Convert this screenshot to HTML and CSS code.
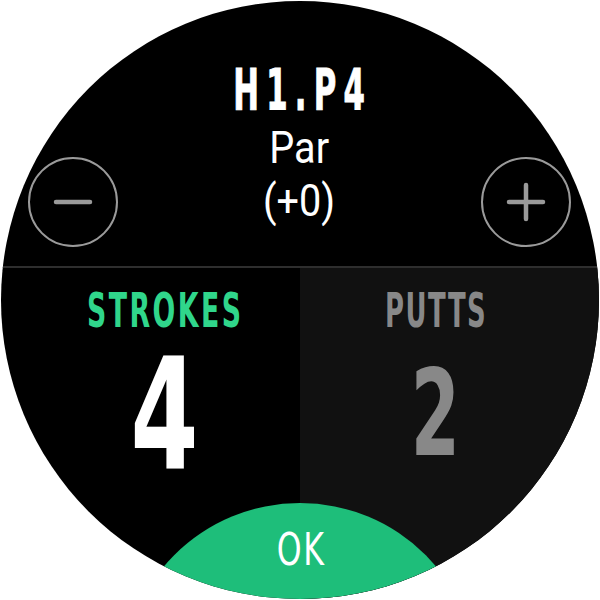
FILE: index.html
```html
<!DOCTYPE html>
<html>
<head>
<meta charset="utf-8">
<link rel="stylesheet" href="styles.css">
</head>
<body>
<div class="watch">
  <div class="top">
    <div class="btn">
      <svg width="40" height="40" viewBox="0 0 40 40"><line x1="3" y1="20" x2="37" y2="20" stroke="#9a9a9a" stroke-width="4.5" stroke-linecap="round"/></svg>
    </div>
    <div class="info">
      <div class="hole"><span class="cond">H1.P4</span></div>
      <div class="par"><span class="narrow">Par</span></div>
      <div class="par"><span class="narrow">(+0)</span></div>
    </div>
    <div class="btn">
      <svg width="40" height="40" viewBox="0 0 40 40"><line x1="3" y1="20" x2="37" y2="20" stroke="#9a9a9a" stroke-width="4.5" stroke-linecap="round"/><line x1="20" y1="3" x2="20" y2="37" stroke="#9a9a9a" stroke-width="4.5" stroke-linecap="round"/></svg>
    </div>
  </div>
  <div class="divider"></div>
  <div class="bottom">
    <div class="panel left">
      <div class="label active"><span class="cond">STROKES</span></div>
      <div class="value big"><span class="num">4</span></div>
    </div>
    <div class="panel right">
      <div class="label"><span class="cond tight">PUTTS</span></div>
      <div class="value small"><span class="num">2</span></div>
    </div>
  </div>
  <div class="ok"><div class="ok-text"><span class="okc">OK</span></div></div>
</div>
</body>
</html>
```
FILE: styles.css
```css
html, body { margin: 0; padding: 0; background: #fff; }
body { width: 600px; height: 600px; }
.watch {
  position: relative;
  width: 598px; height: 598px; margin: 1px;
  border-radius: 50%; overflow: hidden;
  background: #000;
  display: flex; flex-direction: column;
  font-family: "DejaVu Sans Condensed", "DejaVu Sans", sans-serif;
  color: #fff;
}
.cond { display: inline-block; transform: scaleX(0.62); }
.narrow { display: inline-block; transform: scaleX(0.9); }
.num { display: inline-block; transform: scaleX(0.66); }
.okc { display: inline-block; transform: scaleX(0.78); letter-spacing: 2px; margin-right: -1.5px; }
.top {
  height: 265px; flex: none;
  display: flex; align-items: flex-start;
  padding: 0 28px 0 27px; box-sizing: border-box;
}
.btn {
  width: 90px; height: 90px; margin-top: 156px; flex: none;
  border: 2px solid #9a9a9a; border-radius: 50%; box-sizing: border-box;
  display: flex; align-items: center; justify-content: center;
}
.info { flex: 1; display: flex; flex-direction: column; align-items: center; padding-top: 61px; }
.hole { font-size: 57px; line-height: 57px; font-weight: bold; margin-bottom: 2.5px; -webkit-text-stroke: 1px #fff; }
.hole .cond { letter-spacing: 12px; margin-right: -7px; transform: scaleX(0.6); }
.par { font-family: Roboto, sans-serif; font-size: 44px; line-height: 53px; }
.divider { height: 2px; background: #2e2e2e; flex: none; }
.bottom { flex: 1; display: flex; }
.panel { flex: 1; display: flex; flex-direction: column; align-items: center; padding-top: 18px; }
.panel.left { padding-left: 28px; }
.panel.right { padding-right: 28px; background: #111; }
.label { font-size: 48px; line-height: 48px; font-weight: bold; color: #888; }
.label .cond { letter-spacing: 4px; margin-right: -2.5px; }
.label .cond.tight { letter-spacing: 2.5px; margin-right: -1.5px; transform: scaleX(0.6); }
.label.active { color: #30d68b; }
.value { font-weight: bold; }
.value.big { font-size: 155px; line-height: 155px; margin-top: 4px; color: #fff; }
.value.big .num { transform: scaleX(0.7); }
.value.small { font-size: 119px; line-height: 119px; margin-top: 21px; color: #888; }
.ok {
  position: absolute; left: 121px; top: 502px;
  width: 356px; height: 356px; border-radius: 50%;
  background: #1ebe7a;
  display: flex; justify-content: center;
}
.ok-text { font-size: 45px; line-height: 45px; padding-top: 24px; color: #fff; }
```
